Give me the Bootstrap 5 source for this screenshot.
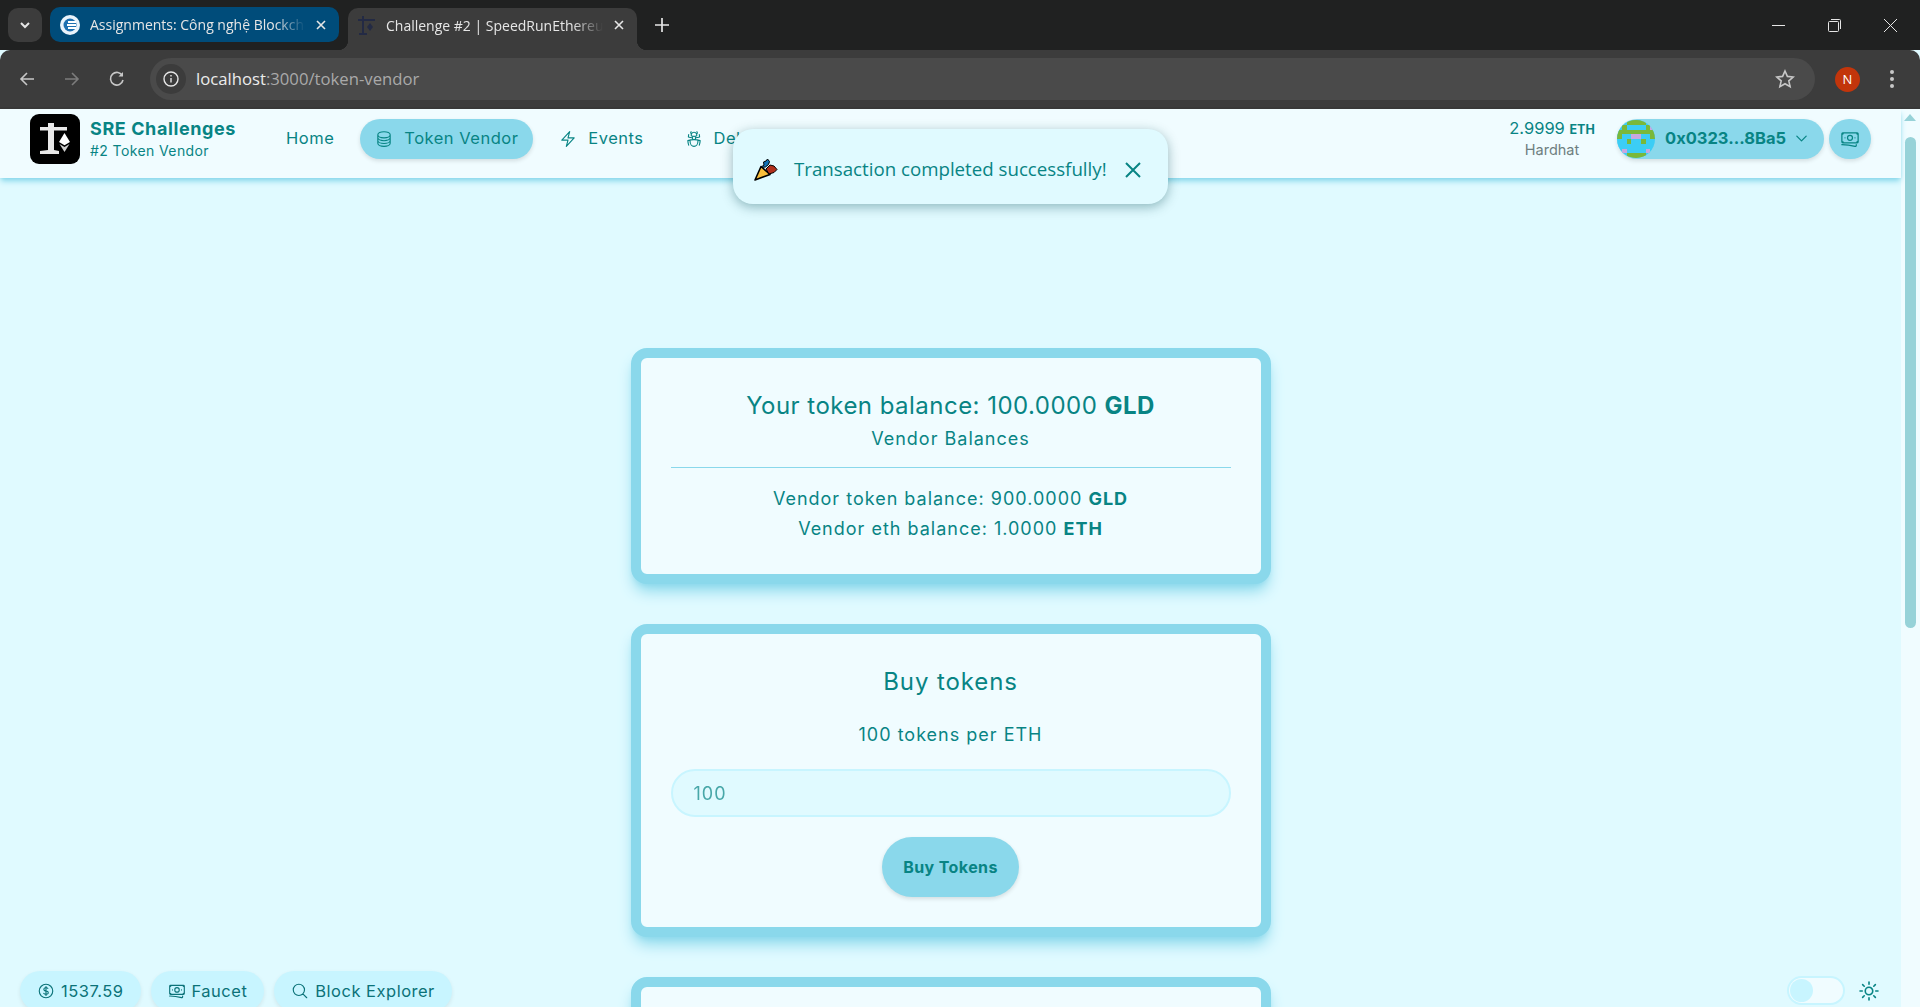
<!DOCTYPE html>
<html lang="en">
<head>
    <meta charset="UTF-8">
    <title>Challenge #2 | SpeedRunEthereum</title>
    <link href="https://cdn.jsdelivr.net/npm/bootstrap@5.3.3/dist/css/bootstrap.min.css" rel="stylesheet">
    <style>
        body { font-family: Inter, "Liberation Sans", sans-serif; background: #e0faff; color: #088484; }
        svg { display: block; flex-shrink: 0; }

        /* browser frame */
        .tab-strip { height: 50px; flex-shrink: 0; background: #202121; font-family: "Open Sans", sans-serif; font-size: 14px; color: #e6e6e6; padding-left: 8px; }
        .tab-menu { width: 34px; height: 34px; margin-top: 8px; background: #3c3c3c; border-radius: 10px; }
        .tab-item { width: 289px; height: 35px; margin-top: 7px; margin-left: 8px; padding: 0 12px 0 10px; border-radius: 10px; background: #004c7a; gap: 10px; }
        .tab-item.is-active { position: relative; height: 42px; margin-top: 8px; margin-left: 9px; padding-bottom: 8px; background: #3c3c3c; border-radius: 10px 10px 0 0; }
        .tab-item.is-active::before, .tab-item.is-active::after { content: ""; position: absolute; bottom: 0; width: 10px; height: 10px; }
        .tab-item.is-active::before { left: -10px; background: radial-gradient(circle at 0 0, transparent 10px, #3c3c3c 10.5px); }
        .tab-item.is-active::after { right: -10px; background: radial-gradient(circle at 100% 0, transparent 10px, #3c3c3c 10.5px); }
        .tab-title { flex: 1; white-space: nowrap; overflow: hidden; -webkit-mask-image: linear-gradient(90deg, #000 86%, transparent); mask-image: linear-gradient(90deg, #000 86%, transparent); }
        .tab-new { margin-left: 18px; }
        .win-controls { gap: 43px; padding-right: 23px; }
        .tool-bar { height: 59px; flex-shrink: 0; background: #3c3c3c; border-bottom: 2px solid #383838; border-radius: 10px 10px 0 0; padding: 1px 0 0 19px; }
        .tool-fwd { margin-left: 29px; }
        .tool-reload { margin-left: 29px; }
        .omni { width: 1665px; height: 42px; margin-left: 25px; background: #4a4a4a; border-radius: 21px; padding: 0 20px 0 6px; font-family: "Open Sans", sans-serif; font-size: 16.7px; color: #a9a9a9; }
        .omni b { font-weight: 400; color: #ececec; }
        .omni-info { width: 30px; height: 30px; border-radius: 50%; background: #3c3c3c; margin-right: 10px; }
        .profile-dot { width: 25px; height: 25px; border-radius: 50%; background: #c2350b; color: #fff; font: 400 13px "Open Sans", sans-serif; margin-left: 20px; }
        .tool-dots { margin-left: 29px; }

        /* page */
        .page-area { flex: 1; min-height: 0; }
        .page-main { flex: 1; min-width: 0; }
        .top-bar { height: 69px; flex-shrink: 0; background: #f0fcff; box-shadow: 0 4px 6px -1px #8ad8eb, 0 2px 4px -2px #8ad8eb; padding: 0 30px 10px; }
        .brand-logo { width: 50px; height: 50px; border-radius: 9px; margin-right: 10px; }
        .brand-title { font-weight: 700; font-size: 18px; line-height: 24px; letter-spacing: .6px; white-space: nowrap; margin-top: 1px; }
        .brand-sub { font-size: 14px; line-height: 20px; letter-spacing: .4px; white-space: nowrap; }
        .top-links { margin-left: 35px; gap: 11px; flex-wrap: nowrap; }
        .top-links .nav-link { height: 40px; padding: 0 15px; gap: 11px; color: #088484; font-size: 16.5px; letter-spacing: .5px; border-radius: 20px; white-space: nowrap; }
        .top-links .nav-link.active { background: #8ad8eb; box-shadow: 0 2px 4px rgba(0,0,0,.12); }
        .wallet-bal { width: 110px; text-align: center; font-size: 16.5px; line-height: 20px; margin-right: 10px; }
        .wallet-bal b { font-size: 12.5px; }
        .wallet-net { color: #6e7f80; font-size: 14.5px; }
        .primary-pill { background: #8ad8eb; color: #088484; border: 0; box-shadow: 0 2px 4px rgba(0,0,0,.12); }
        .addr-pill { width: 207px; height: 40px; border-radius: 20px; font-weight: 700; font-size: 16.5px; }
        .addr-pill svg.blockie { width: 38px; height: 38px; border-radius: 50%; margin-right: 10px; }
        .round-btn { width: 42px; height: 40px; border-radius: 20px; margin-left: 5px; }

        .card-stack { padding-top: 170px; gap: 40px; width: 640px; flex-shrink: 0; }
        .vendor-card { width: 640px; background: #f0fcff; border: 10px solid #8ad8eb; border-radius: 16px; box-shadow: 0 10px 15px -3px #8ad8eb, 0 4px 6px -4px #8ad8eb; padding: 30px; color: #088484; flex-shrink: 0; }
        .bal-rule { height: 1px; background: #8ad8eb; margin-bottom: 16px; }
        .bal-big { font-size: 24px; line-height: 32px; letter-spacing: .47px; margin-top: 2px; }
        .bal-sub { font-size: 18px; line-height: 28px; letter-spacing: 1px; margin-top: 3px; margin-bottom: 14px; }
        .bal-line { font-size: 18px; line-height: 30px; letter-spacing: 1px; }
        .buy-title { font-size: 24px; line-height: 32px; letter-spacing: .9px; margin-top: 2px; }
        .buy-rate { font-size: 18px; line-height: 28px; letter-spacing: 1px; margin-top: 23px; }
        .amount-input { height: 48px; margin-top: 20px; background: #e0faff; border: 2px solid #c8f5ff; border-radius: 24px; padding: 0 21px; color: #088484; font-family: inherit; font-size: 18px; letter-spacing: 1px; }
        .amount-input::placeholder { color: #088484; opacity: .7; }
        .buy-btn { width: 137px; height: 60px; margin-top: 20px; border-radius: 30px; font-weight: 700; font-size: 16px; letter-spacing: .4px; }

        /* floating bits */
        .done-toast { position: absolute; left: 733px; top: 20px; width: 435px; height: 75px; background: #e0faff; border-radius: 20px; box-shadow: 0 3px 12px rgba(0,70,80,.38); padding: 6px 27px 0 21px; font-family: "Open Sans", sans-serif; font-size: 18.7px; color: #088484; }
        .foot-left { position: absolute; left: 20px; top: 862px; gap: 10px; }
        .foot-chip { height: 40px; padding: 0 17px; background: #c8f5ff; border-radius: 20px; gap: 6px; font-size: 16.5px; letter-spacing: .5px; color: #0b7278; box-shadow: 0 2px 4px rgba(0,0,0,.08); }
        .foot-right { position: absolute; left: 1787px; top: 867px; gap: 12px; }
        .theme-switch { width: 58px; height: 29px; background: #f0fcff; border: 2px solid #c8f5ff; border-radius: 15px; padding: 1px; }
        .theme-knob { width: 23px; height: 23px; border-radius: 50%; background: #c8f5ff; }
        .scroll-track { width: 19px; background: #f0fcff; padding: 5px 4px; }
        .scroll-arrow { width: 0; height: 0; border-left: 6px solid transparent; border-right: 6px solid transparent; border-bottom: 7px solid #97d2d8; margin: 0 auto 16px -1px; }
        .scroll-thumb { width: 11px; height: 491px; border-radius: 6px; background: #97d2d8; }
    </style>
</head>
<body class="d-flex flex-column vh-100 overflow-hidden">

    <!-- browser tabs -->
    <div class="tab-strip d-flex">
        <div class="tab-menu d-flex align-items-center justify-content-center">
            <svg width="12" height="12" viewBox="0 0 12 12" fill="none" stroke="#e6e6e6" stroke-width="2"><path d="M2 4l4 4 4-4"/></svg>
        </div>
        <div class="tab-item d-flex align-items-center">
            <svg width="20" height="20" viewBox="0 0 20 20"><circle cx="10" cy="10" r="10" fill="#eaf3fb"/><circle cx="10" cy="10" r="6.5" fill="#1d6fb0"/><path d="M8 6h8v2H8zM7 9h9v2H7zM8 12h8v2H8z" fill="#fff"/></svg>
            <span class="tab-title">Assignments: Công nghệ Blockchain</span>
            <svg width="12" height="12" viewBox="0 0 12 12" stroke="#e6e6e6" stroke-width="1.6"><path d="M2 2l8 8M10 2l-8 8"/></svg>
        </div>
        <div class="tab-item is-active d-flex align-items-center">
            <svg width="18" height="20" viewBox="0 0 18 20" fill="#232a44"><path d="M4 1h2v3h11v2H6v12h3v2H1v-2h3V6H0V4h4z"/><path d="M12 8l3 4-3 4-3-4z"/></svg>
            <span class="tab-title">Challenge #2 | SpeedRunEthereum</span>
            <svg width="12" height="12" viewBox="0 0 12 12" stroke="#e6e6e6" stroke-width="1.6"><path d="M2 2l8 8M10 2l-8 8"/></svg>
        </div>
        <div class="tab-new d-flex align-items-center">
            <svg width="14" height="14" viewBox="0 0 14 14" stroke="#e6e6e6" stroke-width="1.7"><path d="M7 0v14M0 7h14"/></svg>
        </div>
        <div class="win-controls d-flex align-items-center ms-auto">
            <svg width="13" height="13" viewBox="0 0 13 13" stroke="#e6e6e6"><path d="M0 6.5h13"/></svg>
            <svg width="13" height="13" viewBox="0 0 13 13" fill="none" stroke="#e6e6e6"><rect x=".5" y="2.5" width="10" height="10" rx="1"/><path d="M3 .5h8.5a1 1 0 011 1V10"/></svg>
            <svg width="13" height="13" viewBox="0 0 13 13" stroke="#e6e6e6"><path d="M0 0l13 13M13 0L0 13"/></svg>
        </div>
    </div>

    <!-- browser toolbar -->
    <div class="tool-bar d-flex align-items-center">
        <svg width="16" height="16" viewBox="0 0 16 16" fill="none" stroke="#c7c7c7" stroke-width="1.6"><path d="M15 8H2M8 2L2 8l6 6"/></svg>
        <svg class="tool-fwd" width="16" height="16" viewBox="0 0 16 16" fill="none" stroke="#7c7c7c" stroke-width="1.6"><path d="M1 8h13M8 2l6 6-6 6"/></svg>
        <svg class="tool-reload" width="16" height="16" viewBox="0 0 16 16" fill="none" stroke="#c7c7c7" stroke-width="1.6"><path d="M13.5 5A6.3 6.3 0 1014 9"/><path d="M14 1v4.5H9.5" fill="#c7c7c7" stroke="none"/></svg>
        <div class="omni d-flex align-items-center">
            <div class="omni-info d-flex align-items-center justify-content-center">
                <svg width="16" height="16" viewBox="0 0 16 16" fill="none" stroke="#e6e6e6" stroke-width="1.4"><circle cx="8" cy="8" r="7"/><path d="M8 7v4.5M8 4v1.6"/></svg>
            </div>
            <span><b>localhost</b>:3000/token-vendor</span>
            <svg class="ms-auto" width="20" height="20" viewBox="0 0 20 20" fill="none" stroke="#c7c7c7" stroke-width="1.6"><path d="M10 2l2.4 5.4 5.8.6-4.4 3.9 1.3 5.8-5.1-3-5.1 3 1.3-5.8L1.8 8l5.8-.6z"/></svg>
        </div>
        <div class="profile-dot d-flex align-items-center justify-content-center">N</div>
        <svg class="tool-dots" width="6" height="20" viewBox="0 0 6 20" fill="#c7c7c7"><circle cx="3" cy="3" r="2"/><circle cx="3" cy="10" r="2"/><circle cx="3" cy="17" r="2"/></svg>
    </div>

    <div class="page-area d-flex position-relative overflow-hidden">
        <div class="page-main d-flex flex-column">

            <!-- app header -->
            <header class="top-bar d-flex align-items-center position-relative">
                <svg class="brand-logo" viewBox="0 0 50 50">
                    <rect width="50" height="50" fill="#000"/>
                    <path d="M18 9h6v4h13v3.500H24V36l5 1v3H10v-3l8-1V16.500H10V13h8z" fill="#e8e8e8"/>
                    <path d="M34.500 19l5.500 9-5.500 3.200L29 28z" fill="#fff"/>
                    <path d="M29.500 30l5 3 5-3-5 8z" fill="#cfcfcf"/>
                </svg>
                <div>
                    <div class="brand-title">SRE Challenges</div>
                    <div class="brand-sub">#2 Token Vendor</div>
                </div>
                <nav class="nav top-links">
                    <a class="nav-link d-flex align-items-center" href="#">Home</a>
                    <a class="nav-link active d-flex align-items-center" href="#">
                        <svg width="18" height="18" viewBox="0 0 24 24" fill="none" stroke="currentColor" stroke-width="1.5"><path stroke-linecap="round" stroke-linejoin="round" d="M20.250 6.375c0 2.278-3.694 4.125-8.250 4.125S3.750 8.653 3.750 6.375m16.500 0c0-2.278-3.694-4.125-8.250-4.125S3.750 4.097 3.750 6.375m16.500 0v11.250c0 2.278-3.694 4.125-8.250 4.125s-8.250-1.847-8.250-4.125V6.375m16.500 0v3.750m-16.500-3.750v3.750m16.500 0v3.750C20.250 16.153 16.556 18 12 18s-8.250-1.847-8.250-4.125v-3.750m16.500 0c0 2.278-3.694 4.125-8.250 4.125s-8.250-1.847-8.250-4.125"/></svg>
                        Token Vendor
                    </a>
                    <a class="nav-link d-flex align-items-center" href="#">
                        <svg width="18" height="18" viewBox="0 0 24 24" fill="none" stroke="currentColor" stroke-width="1.5"><path stroke-linecap="round" stroke-linejoin="round" d="M3.750 13.500l10.500-11.250L12 10.500h8.250L9.750 21.750 12 13.500H3.750z"/></svg>
                        Events
                    </a>
                    <a class="nav-link d-flex align-items-center" href="#">
                        <svg width="18" height="18" viewBox="0 0 24 24" fill="none" stroke="currentColor" stroke-width="1.5"><path stroke-linecap="round" stroke-linejoin="round" d="M12 12.750c1.148 0 2.278.08 3.383.237 1.037.146 1.866.966 1.866 2.013 0 3.728-2.350 6.750-5.250 6.750S6.750 18.728 6.750 15c0-1.046.83-1.867 1.866-2.013A24.204 24.204 0 0112 12.750zm0 0c2.883 0 5.647.508 8.207 1.440a23.910 23.910 0 01-1.152 6.060M12 12.750c-2.883 0-5.647.508-8.208 1.440.125 2.104.52 4.136 1.153 6.060M12 12.750a2.250 2.250 0 002.248-2.354M12 12.750a2.250 2.250 0 01-2.248-2.354M12 8.250c.995 0 1.971-.08 2.922-.236.403-.066.74-.358.795-.762a3.778 3.778 0 00-.399-2.250M12 8.250c-.995 0-1.970-.08-2.922-.236-.402-.066-.74-.358-.795-.762a3.734 3.734 0 01.4-2.253M12 8.250a2.250 2.250 0 00-2.248 2.146M12 8.250a2.250 2.250 0 012.248 2.146M8.683 5a6.032 6.032 0 01-1.155-1.002c.07-.63.27-1.222.574-1.747m.581 2.749A3.750 3.750 0 0115.318 5m0 0c.427-.283.815-.62 1.155-.999a4.471 4.471 0 00-.575-1.752M4.921 6a24.048 24.048 0 00-.392 3.314c1.668.546 3.416.914 5.223 1.082M19.080 6c.205 1.080.337 2.187.392 3.314a23.882 23.882 0 01-5.223 1.082"/></svg>
                        Debug Contracts
                    </a>
                </nav>
                <div class="wallet-bal ms-auto">
                    <div>2.9999 <b>ETH</b></div>
                    <div class="wallet-net">Hardhat</div>
                </div>
                <div class="addr-pill primary-pill d-flex align-items-center">
                    <svg class="blockie" viewBox="0 0 8 8" shape-rendering="crispEdges">
                        <rect width="8" height="8" fill="#3ccdf5"/>
                        <path fill="#7ab83a" d="M2 0h4v1H2zM1 1h1v1H1zM6 1h1v1H6zM0 2h8v1H0zM0 3h1v1H0zM7 3h1v1H7zM2 4h1v1H2zM5 4h1v1H5zM2 7h4v1H2z"/>
                        <path fill="#c8a8e0" d="M7 1h1v1H7zM3 3h2v1H3zM1 6h1v1H1zM6 6h1v1H6z"/>
                    </svg>
                    <span>0x0323...8Ba5</span>
                    <svg class="ms-2" width="15" height="15" viewBox="0 0 24 24" fill="none" stroke="currentColor" stroke-width="2"><path stroke-linecap="round" stroke-linejoin="round" d="M19.500 8.250l-7.500 7.500-7.500-7.500"/></svg>
                </div>
                <div class="round-btn primary-pill d-flex align-items-center justify-content-center">
                    <svg width="20" height="20" viewBox="0 0 24 24" fill="none" stroke="currentColor" stroke-width="1.5"><path stroke-linecap="round" stroke-linejoin="round" d="M2.250 18.750a60.070 60.070 0 0115.797 2.101c.727.198 1.453-.342 1.453-1.096V18.750M3.750 4.500v.75A.75.75 0 013 6h-.75m0 0v-.375c0-.621.504-1.125 1.125-1.125H20.250M2.250 6v9m18-10.500v.75c0 .414.336.75.75.75h.75m-1.500-1.500h.375c.621 0 1.125.504 1.125 1.125v9.750c0 .621-.504 1.125-1.125 1.125h-.375m1.500-1.500H21a.75.75 0 00-.75.75v.75m0 0H3.750m0 0h-.375a1.125 1.125 0 01-1.125-1.125V15m1.500 1.500v-.75A.75.75 0 003 15h-.75M15 10.500a3 3 0 11-6 0 3 3 0 016 0zm3 0h.008v.008H18V10.500zm-12 0h.008v.008H6V10.500z"/></svg>
                </div>
            </header>

            <!-- vendor cards -->
            <div class="card-stack d-flex flex-column mx-auto">
                <div class="vendor-card card text-center">
                    <div class="bal-big">Your token balance: 100.0000 <b>GLD</b></div>
                    <div class="bal-sub">Vendor Balances</div>
                    <div class="bal-rule"></div>
                    <div class="bal-line">Vendor token balance: 900.0000 <b>GLD</b></div>
                    <div class="bal-line">Vendor eth balance: 1.0000 <b>ETH</b></div>
                </div>
                <div class="vendor-card card text-center">
                    <div class="buy-title">Buy tokens</div>
                    <div class="buy-rate">100 tokens per ETH</div>
                    <input class="form-control amount-input" type="text" placeholder="100">
                    <button class="btn primary-pill buy-btn mx-auto" type="button">Buy Tokens</button>
                </div>
                <div class="vendor-card card"></div>
            </div>
        </div>

        <div class="scroll-track">
            <div class="scroll-arrow"></div>
            <div class="scroll-thumb"></div>
        </div>

        <!-- toast over the header -->
        <div class="done-toast d-flex align-items-center">
            <svg width="24" height="24" viewBox="0 0 24 24">
                <path d="M1 22L7 8.500l9 8z" fill="#fbbf3c" stroke="#000" stroke-width="1.600" stroke-linejoin="round"/>
                <path d="M6.500 9.500L10 7l-.5-3L12 3l1.500-2 2 2.500-1 3-3 2.500z" fill="#1273b5" stroke="#000" stroke-width="1"/>
                <path d="M12 11l4-4 4 1 3 3.500-3 3-5 1.500z" fill="#b1301c" stroke="#000" stroke-width="1"/>
            </svg>
            <span class="ms-3 flex-grow-1">Transaction completed successfully!</span>
            <svg width="16" height="16" viewBox="0 0 16 16" stroke="#088484" stroke-width="2"><path d="M1 1l14 14M15 1L1 15"/></svg>
        </div>

        <!-- bottom left chips -->
        <div class="foot-left d-flex">
            <div class="foot-chip d-flex align-items-center">
                <svg width="18" height="18" viewBox="0 0 24 24" fill="none" stroke="currentColor" stroke-width="1.5"><path stroke-linecap="round" stroke-linejoin="round" d="M12 6v12m-3-2.818l.879.659c1.171.879 3.070.879 4.242 0 1.172-.879 1.172-2.303 0-3.182C13.536 12.219 12.768 12 12 12c-.725 0-1.450-.22-2.003-.659-1.106-.879-1.106-2.303 0-3.182s2.900-.879 4.006 0l.415.33M21 12a9 9 0 11-18 0 9 9 0 0118 0z"/></svg>
                1537.59
            </div>
            <div class="foot-chip d-flex align-items-center">
                <svg width="18" height="18" viewBox="0 0 24 24" fill="none" stroke="currentColor" stroke-width="1.5"><path stroke-linecap="round" stroke-linejoin="round" d="M2.250 18.750a60.070 60.070 0 0115.797 2.101c.727.198 1.453-.342 1.453-1.096V18.750M3.750 4.500v.75A.75.75 0 013 6h-.75m0 0v-.375c0-.621.504-1.125 1.125-1.125H20.250M2.250 6v9m18-10.500v.75c0 .414.336.75.75.75h.75m-1.500-1.500h.375c.621 0 1.125.504 1.125 1.125v9.750c0 .621-.504 1.125-1.125 1.125h-.375m1.500-1.500H21a.75.75 0 00-.75.75v.75m0 0H3.750m0 0h-.375a1.125 1.125 0 01-1.125-1.125V15m1.500 1.500v-.75A.75.75 0 003 15h-.75M15 10.500a3 3 0 11-6 0 3 3 0 016 0zm3 0h.008v.008H18V10.500zm-12 0h.008v.008H6V10.500z"/></svg>
                Faucet
            </div>
            <div class="foot-chip d-flex align-items-center">
                <svg width="18" height="18" viewBox="0 0 24 24" fill="none" stroke="currentColor" stroke-width="1.5"><path stroke-linecap="round" stroke-linejoin="round" d="M21 21l-5.197-5.197m0 0A7.500 7.500 0 105.196 5.196a7.500 7.500 0 0010.607 10.607z"/></svg>
                Block Explorer
            </div>
        </div>

        <!-- theme switch -->
        <div class="foot-right d-flex align-items-center">
            <div class="theme-switch"><div class="theme-knob"></div></div>
            <svg width="24" height="24" viewBox="0 0 24 24" fill="none" stroke="#088484" stroke-width="1.6"><path stroke-linecap="round" stroke-linejoin="round" d="M12 3v2.250m6.364.386l-1.591 1.591M21 12h-2.250m-.386 6.364l-1.591-1.591M12 18.750V21m-4.773-4.227l-1.591 1.591M5.250 12H3m4.227-4.773L5.636 5.636M15.750 12a3.750 3.750 0 11-7.500 0 3.750 3.750 0 017.500 0z"/></svg>
        </div>
    </div>

    <script src="https://cdn.jsdelivr.net/npm/bootstrap@5.3.3/dist/js/bootstrap.bundle.min.js"></script>
</body>
</html>
